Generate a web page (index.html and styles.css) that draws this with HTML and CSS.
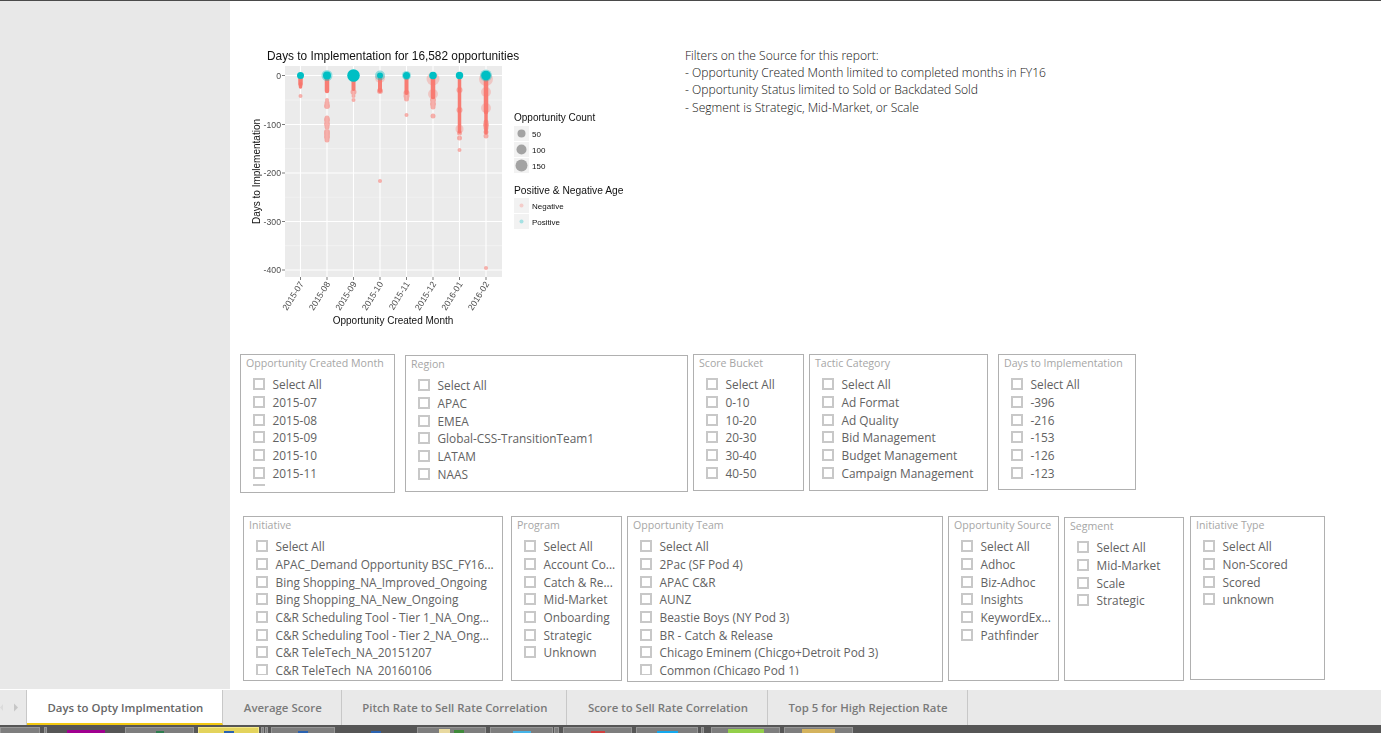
FILE: index.html
```html
<!DOCTYPE html>
<html lang="en">
<head>
<meta charset="utf-8">
<title>Days to Opty Implmentation</title>
<link rel="stylesheet" href="styles.css">
</head>
<body>
<div class="app">
  <div class="main">
    <aside class="sidebar"></aside>
    <section class="canvas">
      <div class="top">
        <svg class="chart" width="400" height="290" viewBox="240 40 400 290" xmlns="http://www.w3.org/2000/svg">
          <text class="c-title" x="267" y="60">Days to Implementation for 16,582 opportunities</text>
          <rect class="panel" x="285" y="66" width="217" height="211"/>
          <g class="grid-minor">
            <path d="M285 100H502M285 148.700H502M285 197.200H502M285 245.700H502"/>
          </g>
          <g class="grid-major">
            <path d="M285 75.500H502M285 124.500H502M285 173H502M285 221.500H502M285 270H502"/>
            <path d="M300.500 66V277M327 66V277M353.500 66V277M380 66V277M406.500 66V277M433 66V277M459.500 66V277M486 66V277"/>
          </g>
          <g class="ticks">
            <path d="M282 75.500H285M282 124.500H285M282 173H285M282 221.500H285M282 270H285"/>
            <path d="M300.500 277V280M327 277V280M353.500 277V280M380 277V280M406.500 277V280M433 277V280M459.500 277V280M486 277V280"/>
          </g>
          <g class="y-labels">
            <text x="281" y="78.500">0</text>
            <text x="281" y="127.500">-100</text>
            <text x="281" y="176">-200</text>
            <text x="281" y="224.500">-300</text>
            <text x="281" y="273">-400</text>
          </g>
          <g class="x-labels">
            <text transform="translate(304 284) rotate(-58)">2015-07</text>
            <text transform="translate(330.500 284) rotate(-58)">2015-08</text>
            <text transform="translate(357 284) rotate(-58)">2015-09</text>
            <text transform="translate(383.500 284) rotate(-58)">2015-10</text>
            <text transform="translate(410 284) rotate(-58)">2015-11</text>
            <text transform="translate(436.500 284) rotate(-58)">2015-12</text>
            <text transform="translate(463 284) rotate(-58)">2016-01</text>
            <text transform="translate(489.500 284) rotate(-58)">2016-02</text>
          </g>
          <text class="c-axis" transform="translate(260 171.500) rotate(-90)" text-anchor="middle">Days to Implementation</text>
          <text class="c-axis" x="393" y="324" text-anchor="middle">Opportunity Created Month</text>

          <g class="soft">
            <circle cx="380" cy="78" r="5"/>
            <circle cx="433" cy="79" r="6.500"/><circle cx="433" cy="94" r="5"/>
            <circle cx="459.500" cy="129" r="4"/>
            <circle cx="486" cy="79" r="7"/><circle cx="486" cy="92" r="5"/><circle cx="486" cy="108" r="5"/>
          </g>
          <g class="dense">
            <path stroke-width="4.500" d="M300.500 78V84"/>
            <path stroke-width="3.500" d="M300.500 84V87"/>
            <path stroke-width="4.500" d="M327 78V91"/>
            <path stroke-width="4" d="M353.500 78V89"/>
            <path stroke-width="4" d="M380 78V91"/>
            <path stroke-width="4" d="M406.500 78V93"/>
            <path stroke-width="4.500" d="M433 78V97"/>
            <path stroke-width="3.500" d="M459.500 78V132"/>
            <path stroke-width="4.500" d="M486 78V112"/>
            <path stroke-width="3.500" d="M486 112V133"/>
          </g>
          <g class="neg">
            <circle cx="300.500" cy="96" r="2"/>
            <circle cx="327" cy="103" r="2.500"/><circle cx="327" cy="106" r="3"/><circle cx="327" cy="100" r="2"/>
            <circle cx="327" cy="118" r="2.500"/><circle cx="327" cy="120" r="3"/><circle cx="327" cy="124" r="3"/><circle cx="327" cy="127" r="2.500"/>
            <circle cx="327" cy="132" r="3"/><circle cx="327" cy="134" r="3"/><circle cx="327" cy="137" r="3"/><circle cx="327" cy="140" r="2.500"/>
            <circle cx="353.500" cy="92" r="3"/><circle cx="353.500" cy="96" r="2"/><circle cx="353.500" cy="100" r="2"/>
            <circle cx="380" cy="91" r="3"/><circle cx="380" cy="181" r="2"/>
            <circle cx="406.500" cy="93" r="3"/><circle cx="406.500" cy="96" r="3"/><circle cx="406.500" cy="99" r="2.500"/><circle cx="406.500" cy="115" r="2"/>
            <circle cx="433" cy="100" r="3"/><circle cx="433" cy="104" r="3"/><circle cx="433" cy="107" r="2.500"/><circle cx="433" cy="116" r="2.500"/>
            <circle cx="459.500" cy="90" r="3"/><circle cx="459.500" cy="110" r="3"/><circle cx="459.500" cy="133" r="2.500"/><circle cx="459.500" cy="138" r="2.500"/><circle cx="459.500" cy="150" r="2"/>
            <circle cx="486" cy="122" r="2.500"/><circle cx="486" cy="125" r="3"/><circle cx="486" cy="128" r="2.500"/><circle cx="486" cy="132" r="2.500"/><circle cx="486" cy="136" r="2.500"/><circle cx="486" cy="268" r="2"/>
          </g>
          <g class="halo">
            <circle cx="327" cy="75.500" r="5.500"/>
            <circle cx="380" cy="75.500" r="5"/>
            <circle cx="406.500" cy="75.500" r="4.500"/>
            <circle cx="486" cy="75.500" r="6"/>
          </g>
          <g class="pos">
            <circle cx="300.500" cy="75.500" r="3.500"/>
            <circle cx="327" cy="75.500" r="4"/>
            <circle cx="353.500" cy="75.500" r="6.300"/>
            <circle cx="380" cy="75.500" r="3"/>
            <circle cx="406.500" cy="75.500" r="3.500"/>
            <circle cx="433" cy="75.500" r="3.800"/>
            <circle cx="459.500" cy="75.500" r="3.700"/>
            <circle cx="486" cy="75.500" r="4.800"/>
          </g>

          <text class="c-legend" x="514" y="121">Opportunity Count</text>
          <rect class="key" x="514" y="126" width="15" height="15"/>
          <rect class="key" x="514" y="142" width="15" height="15"/>
          <rect class="key" x="514" y="158" width="15" height="15"/>
          <g class="size-dot">
            <circle cx="521.500" cy="133.500" r="4"/>
            <circle cx="521.500" cy="149.500" r="5"/>
            <circle cx="521.500" cy="165.500" r="6"/>
          </g>
          <g class="c-key-label">
            <text x="532" y="136.500">50</text>
            <text x="532" y="152.500">100</text>
            <text x="532" y="168.500">150</text>
          </g>
          <text class="c-legend wide" x="514" y="193.500">Positive &amp; Negative Age</text>
          <rect class="key" x="514" y="198" width="15" height="15"/>
          <rect class="key" x="514" y="214" width="15" height="15"/>
          <circle class="soft" cx="521.500" cy="205.500" r="2"/>
          <circle class="pos-faint" cx="521.500" cy="221.500" r="2"/>
          <g class="c-key-label">
            <text x="532" y="208.500">Negative</text>
            <text x="532" y="224.500">Positive</text>
          </g>
        </svg>
        <div class="notes">
          <p>Filters on the Source for this report:</p>
          <p>- Opportunity Created Month limited to completed months in FY16</p>
          <p>- Opportunity Status limited to Sold or Backdated Sold</p>
          <p>- Segment is Strategic, Mid-Market, or Scale</p>
        </div>
      </div>

      <div class="row row-one">
        <div class="slicer s-month">
          <h3>Opportunity Created Month</h3>
          <ul class="list list-month">
            <li><i></i>Select All</li><li><i></i>2015-07</li><li><i></i>2015-08</li><li><i></i>2015-09</li><li><i></i>2015-10</li><li><i></i>2015-11</li><li><i></i>2015-12</li>
          </ul>
        </div>
        <div class="slicer s-region">
          <h3>Region</h3>
          <ul class="list">
            <li><i></i>Select All</li><li><i></i>APAC</li><li><i></i>EMEA</li><li><i></i>Global-CSS-TransitionTeam1</li><li><i></i>LATAM</li><li><i></i>NAAS</li>
          </ul>
        </div>
        <div class="slicer s-score">
          <h3>Score Bucket</h3>
          <ul class="list">
            <li><i></i>Select All</li><li><i></i>0-10</li><li><i></i>10-20</li><li><i></i>20-30</li><li><i></i>30-40</li><li><i></i>40-50</li>
          </ul>
        </div>
        <div class="slicer s-tactic">
          <h3>Tactic Category</h3>
          <ul class="list list-tactic">
            <li><i></i>Select All</li><li><i></i>Ad Format</li><li><i></i>Ad Quality</li><li><i></i>Bid Management</li><li><i></i>Budget Management</li><li><i></i>Campaign Management</li>
          </ul>
        </div>
        <div class="slicer s-days">
          <h3>Days to Implementation</h3>
          <ul class="list">
            <li><i></i>Select All</li><li><i></i>-396</li><li><i></i>-216</li><li><i></i>-153</li><li><i></i>-126</li><li><i></i>-123</li>
          </ul>
        </div>
      </div>

      <div class="row row-two">
        <div class="slicer s-initiative">
          <h3>Initiative</h3>
          <ul class="list list-long">
            <li><i></i>Select All</li><li><i></i>APAC_Demand Opportunity BSC_FY16...</li><li><i></i>Bing Shopping_NA_Improved_Ongoing</li><li><i></i>Bing Shopping_NA_New_Ongoing</li><li><i></i>C&amp;R Scheduling Tool - Tier 1_NA_Ong...</li><li><i></i>C&amp;R Scheduling Tool - Tier 2_NA_Ong...</li><li><i></i>C&amp;R TeleTech_NA_20151207</li><li><i></i>C&amp;R TeleTech_NA_20160106</li>
          </ul>
        </div>
        <div class="slicer s-program">
          <h3>Program</h3>
          <ul class="list">
            <li><i></i>Select All</li><li><i></i>Account Co...</li><li><i></i>Catch &amp; Re...</li><li><i></i>Mid-Market</li><li><i></i>Onboarding</li><li><i></i>Strategic</li><li><i></i>Unknown</li>
          </ul>
        </div>
        <div class="slicer s-team">
          <h3>Opportunity Team</h3>
          <ul class="list list-long">
            <li><i></i>Select All</li><li><i></i>2Pac (SF Pod 4)</li><li><i></i>APAC C&amp;R</li><li><i></i>AUNZ</li><li><i></i>Beastie Boys (NY Pod 3)</li><li><i></i>BR - Catch &amp; Release</li><li><i></i>Chicago Eminem (Chicgo+Detroit Pod 3)</li><li><i></i>Common (Chicago Pod 1)</li>
          </ul>
        </div>
        <div class="slicer s-source">
          <h3>Opportunity Source</h3>
          <ul class="list">
            <li><i></i>Select All</li><li><i></i>Adhoc</li><li><i></i>Biz-Adhoc</li><li><i></i>Insights</li><li><i></i>KeywordEx...</li><li><i></i>Pathfinder</li>
          </ul>
        </div>
        <div class="slicer s-segment">
          <h3>Segment</h3>
          <ul class="list">
            <li><i></i>Select All</li><li><i></i>Mid-Market</li><li><i></i>Scale</li><li><i></i>Strategic</li>
          </ul>
        </div>
        <div class="slicer s-type">
          <h3>Initiative Type</h3>
          <ul class="list">
            <li><i></i>Select All</li><li><i></i>Non-Scored</li><li><i></i>Scored</li><li><i></i>unknown</li>
          </ul>
        </div>
      </div>
    </section>
  </div>

  <nav class="tabs">
    <div class="tab-nav">
      <svg width="26" height="35" viewBox="0 0 26 35" xmlns="http://www.w3.org/2000/svg">
        <path class="arrow-off" d="M3 14l-3 3.500 3 3.500z"/>
        <path class="arrow-on" d="M14 13.500l4 4-4 4z"/>
      </svg>
    </div>
    <div class="tab active">Days to Opty Implmentation</div>
    <div class="tab">Average Score</div>
    <div class="tab">Pitch Rate to Sell Rate Correlation</div>
    <div class="tab">Score to Sell Rate Correlation</div>
    <div class="tab">Top 5 for High Rejection Rate</div>
  </nav>

  <footer class="taskbar">
    <div class="tb w40"></div>
    <div class="tb w3 m4"></div>
    <div class="slot w78"><b class="ic purple"></b></div>
    <div class="tb w69"><b class="ic green"></b></div>
    <div class="tb yellow w61 m4"><b class="ic blue"></b></div>
    <div class="tb w3 m2"></div>
    <div class="tb w3 m1"></div>
    <div class="tb w64 m3"><b class="ic blue"></b></div>
    <div class="slot w82"><b class="ic blue"></b></div>
    <div class="tb w69"><b class="ic folder"></b><b class="ic lime"></b></div>
    <div class="tb w63 m4"><b class="ic cyan"></b></div>
    <div class="tb w5 m1"></div>
    <div class="tb w69 m4"><b class="ic red"></b></div>
    <div class="tb w62 m4"><b class="ic sky"></b></div>
    <div class="tb w3 m3"></div>
    <div class="tb w69 m7"><b class="ic leaf"></b></div>
    <div class="tb w69 m4"><b class="ic folder wide"></b></div>
  </footer>
</div>
</body>
</html>
```

FILE: styles.css
```css
* { box-sizing: border-box; }

html, body {
  margin: 0;
  height: 100%;
  background: #fff;
  overflow: hidden;
}

.app {
  width: 1381px;
  height: 733px;
  display: flex;
  flex-direction: column;
  border-top: 1px solid #4a4a4a;
  font-family: "Open Sans", "Noto Sans", sans-serif;
}

.main {
  height: 689px;
  display: flex;
}

.sidebar {
  width: 230px;
  height: 688px;
  background: #e8e8e8;
}

.canvas {
  flex: 1;
  padding-left: 10px;
}

.top {
  height: 353px;
  display: flex;
  align-items: flex-start;
}

.chart {
  margin-top: 39px;
  flex: none;
  display: block;
  filter: blur(0.3px);
}

.notes {
  margin: 46px 0 0 45px;
  font-size: 12.1px;
  font-weight: 300;
  line-height: 17.2px;
  color: #111;
}

.notes p { margin: 0; }

/* chart parts */
.c-title { font: 11.85px "Liberation Sans", Arial, sans-serif; fill: #111; }
.c-axis { font: 10px "Liberation Sans", Arial, sans-serif; fill: #111; }
.c-legend { font: 10px "Liberation Sans", Arial, sans-serif; fill: #111; }
.c-legend.wide { font-size: 10.25px; }
.c-key-label text { font: 8px "Liberation Sans", Arial, sans-serif; fill: #111; }
.y-labels text { font: 8.7px "Liberation Sans", Arial, sans-serif; fill: #4d4d4d; text-anchor: end; }
.x-labels text { font: 8.7px "Liberation Sans", Arial, sans-serif; fill: #4d4d4d; text-anchor: end; }
.panel { fill: #ebebeb; }
.grid-major path { stroke: #fff; stroke-width: 1.1; fill: none; }
.grid-minor path { stroke: #f6f6f6; stroke-width: 0.6; fill: none; }
.ticks path { stroke: #444; stroke-width: 0.7; fill: none; }
.dense path { stroke: #f8766d; stroke-linecap: round; opacity: 0.95; fill: none; }
.neg { fill: #f8766d; opacity: 0.55; }
.soft { fill: #f8766d; opacity: 0.3; }
.halo { fill: #00bfc4; opacity: 0.38; }
.pos { fill: #00bfc4; }
.pos-faint { fill: #00bfc4; opacity: 0.32; }
.key { fill: #f2f2f2; }
.size-dot { fill: #a3a3a3; }

/* slicers */
.row {
  display: flex;
  align-items: flex-start;
}

.row-two {
  margin-top: 23px;
  padding-left: 3px;
}

.slicer {
  flex: none;
  border: 1px solid #b0b0b0;
  padding-left: 12px;
  overflow: hidden;
}

.slicer h3 {
  margin: 0 0 0 -7px;
  height: 20.500px;
  font-size: 10.6px;
  font-weight: 400;
  line-height: 17px;
  color: #a6a6a6;
  white-space: nowrap;
}

.list {
  margin: 0;
  padding: 0;
  list-style: none;
  overflow: hidden;
}

.list-month { height: 110px; }
.list-long { height: 137px; }

.list li {
  height: 17.7px;
  display: flex;
  align-items: center;
  gap: 7.500px;
  font-size: 11.85px;
  color: #626262;
  white-space: nowrap;
}

.list li i {
  flex: none;
  width: 12px;
  height: 12px;
  border: 2px solid #c8c8c8;
  background: #fff;
}

.s-month { width: 155px; height: 139px; }
.s-region { width: 283px; height: 137px; margin: 1px 0 0 10px; }
.s-score { width: 111px; height: 137px; margin-left: 5px; }
.s-tactic { width: 179px; height: 137px; margin-left: 5px; }
.s-days { width: 138px; height: 136px; margin-left: 10px; }
.s-initiative { width: 260px; height: 165px; }
.s-program { width: 111px; height: 165px; margin-left: 8px; }
.s-team { width: 316px; height: 166px; margin-left: 5px; }
.s-source { width: 111px; height: 165px; margin-left: 5px; }
.s-segment { width: 120px; height: 164px; margin: 1px 0 0 5px; }
.s-type { width: 135px; height: 164px; margin-left: 6px; }

/* page tabs */
.tabs {
  height: 35px;
  display: flex;
  background: #e9e9e9;
}

.tab-nav {
  width: 27px;
  border-right: 1px solid #c8c8c8;
}

.tab-nav svg { display: block; }
.arrow-off { fill: #dcdcdc; }
.arrow-on { fill: #c6c6c6; }

.tab {
  padding: 0 19px 0 20.500px;
  line-height: 36px;
  font-size: 11.4px;
  font-weight: 600;
  color: #7a7a7a;
  border-right: 1px solid #c8c8c8;
  white-space: nowrap;
}

.tab.active {
  background: #fff;
  color: #666;
  border-bottom: 2px solid #f2c811;
}

/* cut-off desktop taskbar */
.taskbar {
  flex: 1;
  display: flex;
  padding-top: 2px;
  background: #565656;
  overflow: hidden;
}

.tb, .slot {
  flex: none;
  display: flex;
  justify-content: center;
  align-items: flex-end;
  gap: 4px;
}

.tb {
  background: #7e7e7e;
  border: 1px solid #979797;
  border-bottom: 0;
}

.tb.yellow {
  background: #e3d35c;
  border-color: #f3e88a;
}

.w3 { width: 3px; }
.w5 { width: 5px; }
.w40 { width: 40px; }
.w61 { width: 61px; }
.w62 { width: 62px; }
.w63 { width: 63px; }
.w64 { width: 64px; }
.w69 { width: 69px; }
.w78 { width: 78px; }
.w82 { width: 82px; }
.m1 { margin-left: 1px; }
.m2 { margin-left: 2px; }
.m3 { margin-left: 3px; }
.m4 { margin-left: 4px; }
.m7 { margin-left: 7px; }

.ic { display: block; width: 10px; height: 3px; }
.purple { width: 38px; height: 3px; background: #a0008f; }
.green { width: 8px; height: 2px; background: #2e7d4f; }
.blue { height: 2px; background: #2a62b0; }
.folder { width: 11px; height: 4px; background: #e8d9a0; }
.folder.wide { width: 33px; background: #d4b35e; }
.lime { height: 3px; background: #3f8a3a; }
.cyan { width: 18px; height: 2px; background: #45b4e8; }
.red { width: 14px; height: 2px; background: #d1403f; }
.sky { width: 21px; height: 2px; background: #13a8ee; }
.leaf { width: 36px; height: 4px; background: #93cf4a; }
```
